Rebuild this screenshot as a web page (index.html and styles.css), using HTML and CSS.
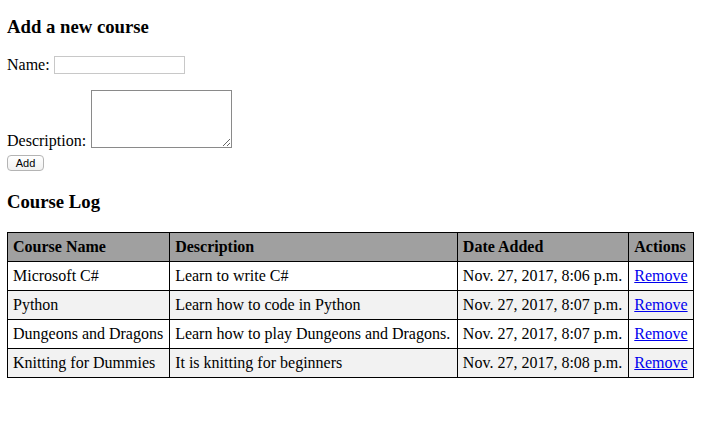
FILE: index.html
```html
<!DOCTYPE html>
<html>
<head>
<meta charset="utf-8">
<link rel="stylesheet" href="styles.css">
</head>
<body>
<h3 class="title title-first">Add a new course</h3>
<form class="course-form">
  <div class="row row-name"><span class="label">Name:</span><input class="name-input" type="text"></div>
  <div class="row row-desc"><span class="label">Description:</span><textarea class="desc-input"></textarea></div>
  <button class="add-btn" type="button">Add</button>
</form>
<h3 class="title title-log">Course Log</h3>
<table class="log">
  <thead>
    <tr><th>Course Name</th><th>Description</th><th>Date Added</th><th>Actions</th></tr>
  </thead>
  <tbody>
    <tr><td>Microsoft C#</td><td>Learn to write C#</td><td>Nov. 27, 2017, 8:06 p.m.</td><td><a href="#">Remove</a></td></tr>
    <tr><td>Python</td><td>Learn how to code in Python</td><td>Nov. 27, 2017, 8:07 p.m.</td><td><a href="#">Remove</a></td></tr>
    <tr><td>Dungeons and Dragons</td><td>Learn how to play Dungeons and Dragons.</td><td>Nov. 27, 2017, 8:07 p.m.</td><td><a href="#">Remove</a></td></tr>
    <tr><td>Knitting for Dummies</td><td>It is knitting for beginners</td><td>Nov. 27, 2017, 8:08 p.m.</td><td><a href="#">Remove</a></td></tr>
  </tbody>
</table>
</body>
</html>
```
FILE: styles.css
```css
html, body {
  background: #fff;
}
body {
  display: flow-root;
  margin: 0;
  padding: 0 8px 8px 7px;
  font-family: "Liberation Serif", "Times New Roman", serif;
  font-size: 16px;
  line-height: 18px;
  color: #000;
}
.title {
  font-size: 18.72px;
  font-weight: bold;
  line-height: 22px;
  margin: 0;
}
.title-first {
  margin-top: 16px;
}
.title-log {
  margin-top: 20px;
  margin-bottom: 19px;
}
.course-form {
  margin: 0;
}
.row {
  display: flex;
  gap: 4px;
}
.row-name {
  margin-top: 18px;
  align-items: center;
}
.row-desc {
  margin-top: 16px;
  align-items: flex-end;
  gap: 5px;
}
.label {
  display: block;
  line-height: 18px;
}
.name-input {
  box-sizing: border-box;
  width: 131px;
  height: 18px;
  border: 1px solid #c8c8c8;
  padding: 0 2px;
  margin: 0;
  font: 13px "Liberation Sans", Arial, sans-serif;
}
.desc-input {
  box-sizing: border-box;
  width: 141px;
  height: 58px;
  border: 1px solid #8a8a8a;
  margin: 0 0 2px;
  padding: 2px;
  font: 13px "Liberation Mono", monospace;
}
.add-btn {
  display: block;
  box-sizing: border-box;
  width: 37px;
  height: 16px;
  margin: 5px 0 0;
  padding: 0;
  border: 1px solid #b4b4b4;
  border-radius: 4px;
  background: linear-gradient(#ffffff, #f1f1f1);
  font: 11px "Liberation Sans", Arial, sans-serif;
  color: #000;
  line-height: 14px;
}
.log {
  width: 100%;
  border-collapse: collapse;
}
.log th, .log td {
  border: 1px solid #000;
  padding: 5px;
  text-align: left;
  line-height: 18px;
  white-space: nowrap;
}
.log th {
  background: #a0a0a0;
  font-weight: bold;
}
.log tbody tr:nth-child(even) td {
  background: #f2f2f2;
}
.log a {
  color: #0000ee;
  text-decoration: underline;
}
```
